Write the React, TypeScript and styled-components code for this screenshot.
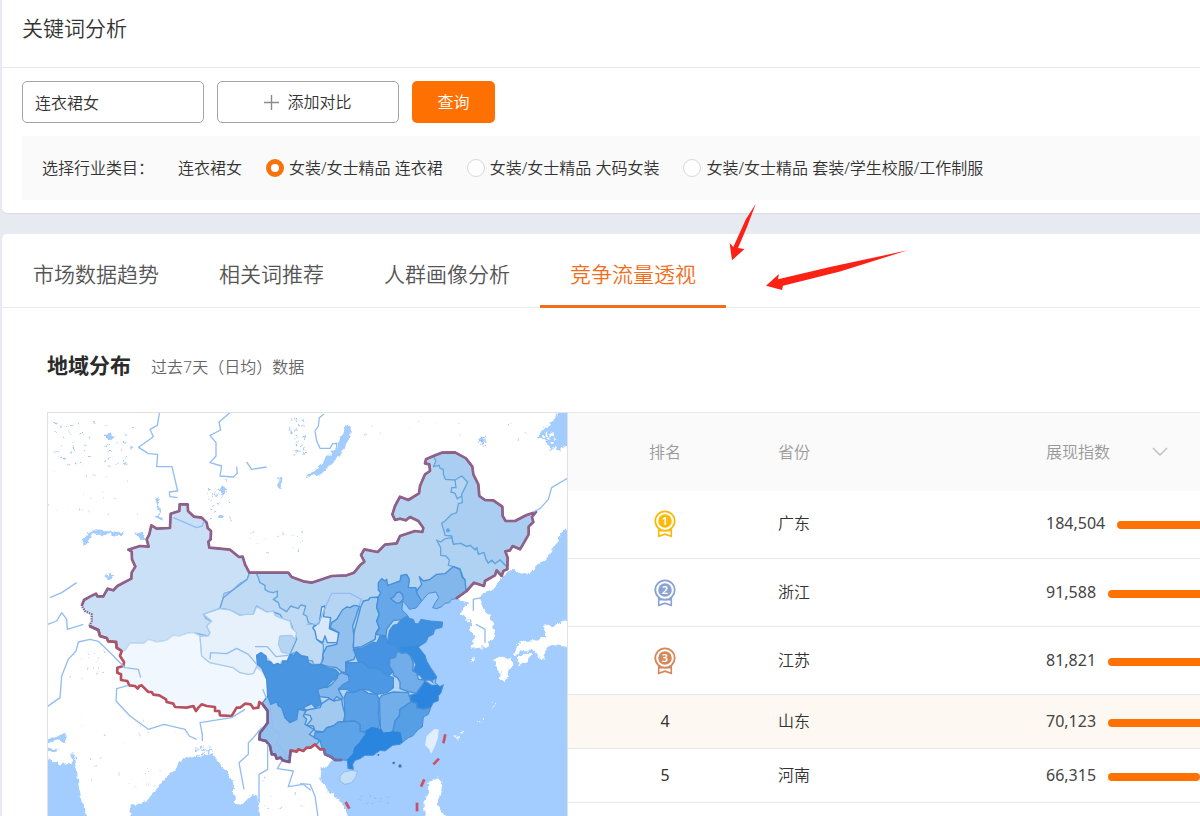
import React, { useState } from "react";
import styled, { createGlobalStyle } from "styled-components";

const GlobalStyle = createGlobalStyle`
  *, *::before, *::after { box-sizing: border-box; }
  html { overflow-x: hidden; }
  body {
    margin: 0;
    background: #e7eaf1;
    color: #333;
    font: 350 16px/24px "Noto Sans", "Noto Sans CJK SC", sans-serif;
  }
  button, input { font: inherit; color: inherit; }
`;

const Page = styled.main`
  position: relative;
  padding-left: 2px;
  display: flex;
  flex-direction: column;
  gap: 21px;
  overflow: hidden;
`;

const Card = styled.section<{ $first?: boolean }>`
  background: #fff;
  border-radius: ${(p) => (p.$first ? "0 0 0 5px" : "5px 0 0 0")};
  box-shadow: 0 1px 1px #d9dbe3;
`;

const CardHeader = styled.header`
  height: 68px;
  padding: 13px 20px;
  border-bottom: 1px solid #e6e8eb;
`;

const Title = styled.h1`
  margin: 0;
  font-size: 21px;
  line-height: 30px;
  font-weight: 350;
`;

const SearchForm = styled.form`
  padding: 13px 0 13px 20px;
`;

const SearchRow = styled.div`
  display: flex;
  gap: 13px;
  margin-bottom: 13px;
`;

const KeywordInput = styled.input`
  width: 182px;
  height: 42px;
  padding: 0 12px;
  border: 1px solid #a3a5a8;
  border-radius: 5px;
  background: #fff;
  outline: none;
`;

const CompareButton = styled.button`
  width: 182px;
  height: 42px;
  display: flex;
  align-items: center;
  justify-content: center;
  gap: 8px;
  border: 1px solid #a3a5a8;
  border-radius: 5px;
  background: #fff;
`;

const QueryButton = styled.button`
  width: 83px;
  height: 42px;
  border: 0;
  border-radius: 5px;
  background: #ff7003;
  color: #fff;
`;

const Filter = styled.div`
  height: 64px;
  padding: 0 20px;
  display: flex;
  align-items: center;
  gap: 24px;
  background: #fafafa;
  white-space: nowrap;
`;

const RadioLabel = styled.label`
  display: flex;
  align-items: center;
  gap: 5px;
`;

const Radio = styled.input`
  appearance: none;
  width: 18px;
  height: 18px;
  margin: 0;
  border: 1px solid #d8d8d8;
  border-radius: 50%;
  background: #fff;
  &:checked {
    border: 5px solid #f5730c;
  }
`;

const Tabs = styled.nav`
  display: flex;
  height: 74px;
  padding-left: 1px;
  border-bottom: 1px solid #e9eaed;
`;

const Tab = styled.button<{ $active: boolean }>`
  height: 74px;
  padding: 8px 30px 0;
  border: 0;
  border-bottom: 3px solid ${(p) => (p.$active ? "#f26d1b" : "transparent")};
  background: none;
  font-size: 21px;
  line-height: 30px;
  color: ${(p) => (p.$active ? "#f26d1b" : "#555")};
`;

const Region = styled.div`
  padding: 42px 0 0 45px;
`;

const RegionHeader = styled.div`
  display: flex;
  align-items: baseline;
  gap: 20px;
  height: 62px;
`;

const RegionTitle = styled.h2`
  margin: 0;
  font-size: 21px;
  line-height: 30px;
  font-weight: 700;
  color: #2b2b2b;
`;

const Period = styled.span`
  color: #666;
`;

const RegionBody = styled.div`
  display: flex;
  align-items: flex-start;
`;

const MapFrame = styled.figure`
  flex: 0 0 521px;
  margin: 0;
  border: 1px solid #dfe1e4;
  border-bottom: 0;
  svg {
    display: block;
    width: 100%;
  }
`;

const TableArea = styled.div`
  flex: 1;
  min-width: 0;
`;

const Ranking = styled.table`
  width: 100%;
  table-layout: fixed;
  border-collapse: collapse;
`;

const Th = styled.th<{ $width?: string; $center?: boolean }>`
  width: ${(p) => p.$width ?? "auto"};
  height: 78px;
  padding: 0 0 0 ${(p) => (p.$center ? "0" : "16px")};
  text-align: ${(p) => (p.$center ? "center" : "left")};
  font-weight: 350;
  color: #999;
  background: #fafafa;
  border-top: 1px solid #e6e8eb;
`;

const SortButton = styled.button`
  display: flex;
  align-items: center;
  gap: 42px;
  padding: 0;
  border: 0;
  background: none;
`;

const Row = styled.tr<{ $tall: boolean; $hovered: boolean }>`
  height: ${(p) => (p.$tall ? "68px" : "54px")};
  border-bottom: 1px solid #e6e8eb;
  background: ${(p) => (p.$hovered ? "#fdf9f2" : "#fff")};
`;

const Td = styled.td<{ $center?: boolean }>`
  padding: 0 0 2px ${(p) => (p.$center ? "0" : "16px")};
  text-align: ${(p) => (p.$center ? "center" : "left")};
  font-weight: ${(p) => (p.$center ? 400 : 350)};
  svg {
    display: block;
    margin: 2px auto 0;
  }
`;

const Metric = styled.div`
  display: flex;
  align-items: center;
  gap: 12px;
  overflow: hidden;
  font-weight: 400;
  color: #444;
`;

const Bar = styled.span`
  flex: none;
  height: 8px;
  margin-top: 4px;
  border-radius: 4px;
  background: #ff7103;
`;

const Arrows = styled.svg`
  position: absolute;
  left: 728px;
  top: 202px;
  pointer-events: none;
`;

/* ---------- map ---------- */

const CHINA =
  "125,600 132,582 150,572 168,563 172,571 190,571 203,548 220,553 232,540 274,518 275,500 286,482 276,460 275,437 265,431 300,420 326,422 320,400 328,385 334,358 350,368 390,366 392,323 418,315 419,295 443,295 444,315 462,332 485,335 500,350 503,366 513,375 512,400 505,407 508,425 570,431 597,453 608,452 615,475 628,500 745,500 755,513 790,526 815,530 875,510 920,508 942,500 960,478 973,467 963,447 973,430 1013,438 1035,416 1070,412 1080,390 1125,375 1147,378 1150,366 1135,345 1110,333 1097,343 1080,338 1065,342 1057,325 1065,300 1080,272 1105,282 1137,262 1140,240 1155,205 1170,195 1168,175 1155,172 1158,160 1180,150 1205,140 1245,139 1278,157 1297,182 1300,205 1315,235 1318,270 1335,282 1360,283 1387,302 1388,330 1397,345 1425,345 1460,327 1488,318 1476,333 1480,348 1466,362 1466,385 1452,410 1440,430 1418,420 1410,433 1396,436 1403,455 1402,490 1390,495 1385,510 1370,493 1365,508 1335,525 1332,540 1302,530 1280,555 1248,578";
const COAST =
  "1248,578 1235,580 1228,590 1215,592 1205,602 1190,608 1178,605 1186,590 1196,575 1188,558 1165,562 1145,585 1128,606 1108,610 1100,598 1088,585 1086,612 1100,625 1108,637 1120,640 1125,653 1135,653 1143,640 1170,645 1208,648 1206,664 1184,670 1180,685 1165,692 1158,708 1135,723 1155,748 1160,765 1172,785 1190,812 1185,830 1200,842 1210,836 1203,860 1195,870 1195,884 1180,890 1172,905 1165,925 1150,933 1147,963 1135,970 1118,990 1105,995 1080,1015 1058,1018 1035,1035 1020,1033 1000,1048 975,1048 960,1058 945,1063 938,1075 940,1090 924,1088 922,1063 905,1062";
const SOUTH =
  "905,1062 885,1062 872,1052 855,1045 852,1030 840,1030 825,1015 812,1025 800,1025 790,1035 775,1030 770,1037 752,1033 748,1068 728,1063 722,1055 710,1058 705,1045 695,1045 690,1020 678,1005 658,1000 660,980 672,965 683,950 683,915 668,895 658,888 655,905 640,907 632,895 615,893 600,905 590,905 575,930 540,928 538,915 525,915 525,903 500,900 485,895 475,905 468,915 460,900 440,905 405,903 400,893 380,888 378,880 358,868 340,866 335,858 325,858 305,838 298,840 293,848 285,840 268,838 262,825 243,822 243,805 232,800 232,785 250,780 252,768 240,750 245,735 230,725 228,708 205,706 200,696 180,690 175,672 148,660";
const WEST = "148,660 155,645 155,625 135,615 125,600";

const PROVINCES: { name: string; fill: string; points: string; line?: string }[] = [
  { name: "heilongjiang", fill: "#a9cef2", points: "1180,150 1188,165 1180,182 1198,178 1200,187 1210,190 1210,205 1216,220 1245,222 1265,210 1283,228 1275,245 1265,265 1267,290 1255,293 1250,320 1235,325 1215,345 1205,352 1212,375 1215,388 1235,390 1240,415 1262,412 1280,422 1290,418 1305,432 1310,425 1315,445 1332,440 1338,460 1345,472 1355,463 1365,473 1380,462 1400,482 1500,480 1520,300 1330,80 1180,80", line: "#64a5de" },
  { name: "jilin", fill: "#afd2f2", points: "1190,402 1202,408 1215,398 1235,395 1240,415 1262,412 1280,422 1290,418 1305,432 1310,425 1315,445 1332,440 1338,460 1345,472 1355,463 1365,473 1380,462 1400,482 1430,520 1280,580 1270,515 1260,488 1240,482 1225,478 1228,462 1218,450 1202,448 1202,425", line: "#64a5de" },
  { name: "liaoning", fill: "#82b7ec", points: "1130,555 1145,535 1138,512 1150,525 1170,520 1190,505 1215,503 1230,490 1240,482 1260,490 1267,515 1275,520 1278,555 1300,600 1180,640 1130,600" },
  { name: "xinjiang", fill: "#cae0f6", points: "628,500 622,520 600,532 575,555 552,562 548,580 540,607 490,625 498,638 512,645 510,655 500,660 510,680 505,690 460,680 440,682 420,690 400,688 380,703 350,708 325,700 312,712 270,712 255,733 150,760 80,640 100,270 640,270", line: "#87b5e5" },
  { name: "tibet", fill: "#f1f7fe", points: "240,738 255,733 270,712 312,712 325,700 350,708 380,703 400,688 420,690 440,682 460,680 480,690 485,750 510,770 580,785 600,800 625,805 640,800 650,785 665,795 680,820 686,880 683,960 200,960 200,735", line: "#c6dcf2" },
  { name: "gansu", fill: "#bfdaf4", points: "648,500 655,515 660,530 675,538 675,550 685,557 700,560 712,555 712,572 700,580 715,590 720,605 740,617 752,600 775,608 782,597 797,600 790,625 800,630 805,650 820,655 835,685 835,705 850,715 850,735 845,775 820,775 818,765 803,763 800,752 780,748 770,738 750,745 770,700 750,645 735,650 720,625 700,618 680,618 650,600 640,625 600,628 570,612 540,607 550,575 575,555 622,520 628,500", line: "#64a5de" },
  { name: "qinghai", fill: "#e6f1fc", points: "490,625 540,608 570,612 600,628 620,625 640,625 650,602 680,618 700,615 705,628 720,635 750,645 755,665 770,680 765,700 755,688 720,690 715,715 725,738 750,745 740,768 725,765 720,778 700,775 680,755 663,740 650,748 655,770 640,803 625,805 600,800 580,785 510,770 485,750 480,690 505,690 510,680 500,660 515,645", line: "#a9cbed" },
  { name: "ningxia", fill: "#d6e8fa", points: "845,603 855,600 850,632 872,635 868,668 895,680 895,710 862,710 855,690 848,710 830,700 825,675 818,665 838,650" },
  { name: "shaanxi", fill: "#91bfee", points: "907,612 920,603 930,605 942,598 958,600 945,640 938,660 942,690 940,720 948,745 942,760 917,768 918,800 905,798 890,785 865,782 842,775 850,758 848,745 860,722 890,715 897,680 870,665 875,650 890,640" },
  { name: "shanxi", fill: "#a3caf0", points: "962,603 970,585 985,582 990,575 1015,573 1010,605 1018,625 1010,645 1018,665 1008,680 1005,700 965,722 940,726 942,680 950,650" },
  { name: "hebei", fill: "#65a7e8", points: "1015,530 1025,518 1035,525 1040,520 1043,538 1060,532 1080,525 1083,508 1100,505 1108,520 1105,545 1128,545 1130,560 1145,585 1135,612 1100,640 1060,643 1040,670 1038,690 1008,685 1018,665 1010,645 1018,625 1010,605 1015,573 1022,560 1015,552" },
  { name: "beijing", fill: "#88b9ed", points: "1052,578 1062,572 1070,560 1080,558 1088,567 1090,580 1080,590 1070,592" },
  { name: "shandong", fill: "#3f90e1", points: "1045,695 1048,675 1060,658 1072,655 1085,640 1100,632 1150,620 1230,630 1230,680 1140,728 1110,733 1100,728 1090,735 1075,725 1058,725 1042,713" },
  { name: "henan", fill: "#4693e3", points: "940,730 970,725 1000,708 1010,712 1020,690 1038,692 1042,713 1058,718 1080,730 1078,745 1065,755 1048,755 1045,772 1055,780 1062,795 1045,810 1025,798 1015,788 985,785 970,770 955,768 948,750" },
  { name: "jiangsu", fill: "#358be0", points: "1075,733 1080,720 1140,715 1220,835 1180,830 1170,822 1150,822 1140,808 1118,800 1128,775 1112,750 1100,740 1085,742" },
  { name: "anhui", fill: "#70adea", points: "1072,735 1085,742 1100,740 1112,750 1120,772 1118,795 1130,800 1135,820 1155,822 1150,845 1140,845 1130,862 1105,857 1080,848 1080,828 1072,815 1060,808 1060,798 1048,780 1050,757 1065,755" },
  { name: "hubei", fill: "#4c98e4", points: "918,770 950,770 970,770 985,785 1015,788 1045,810 1060,815 1060,845 1040,860 1010,865 985,852 965,850 940,860 920,850 895,850 900,835 925,828 932,815 918,800" },
  { name: "zhejiang", fill: "#2b84dd", points: "1155,825 1175,838 1240,825 1230,890 1160,925 1145,910 1130,905 1130,892 1113,888 1110,868 1130,862 1140,848" },
  { name: "chongqing", fill: "#83b7ed", points: "832,850 845,842 860,845 875,835 890,818 895,805 905,800 925,808 928,825 910,835 895,850 908,875 905,882 890,872 880,885 865,875 838,872" },
  { name: "sichuan", fill: "#4a95e1", points: "650,748 663,740 678,750 680,765 692,768 700,778 712,772 725,778 728,765 742,765 750,745 762,748 770,738 785,750 803,753 805,770 820,778 842,775 860,785 885,790 895,800 890,815 875,825 860,842 832,850 838,872 845,895 825,905 815,893 790,905 800,915 785,918 775,910 770,940 750,950 735,935 725,905 715,900 710,888 692,895 683,870 680,820 665,785 652,775" },
  { name: "yunnan", fill: "#97c2ed", points: "668,890 683,870 692,895 710,888 715,900 725,905 735,935 750,950 770,940 775,910 800,915 790,930 800,940 795,955 822,970 808,985 825,995 840,1003 825,1020 812,1080 680,1080 640,1000 680,930" },
  { name: "guizhou", fill: "#a2caf0", points: "792,925 800,912 840,905 845,893 868,878 880,885 905,880 908,900 915,925 910,950 895,948 880,960 860,965 850,978 825,975 820,960 800,958 815,940 810,928" },
  { name: "hunan", fill: "#5aa0e6", points: "912,875 920,858 940,860 965,850 985,862 1010,865 1018,880 1015,920 1020,960 1010,970 1000,965 990,982 960,975 960,955 945,945 912,950 915,925" },
  { name: "jiangxi", fill: "#72afea", points: "1018,880 1025,868 1060,858 1105,860 1113,888 1095,900 1080,910 1078,930 1065,945 1062,970 1055,980 1022,982 1020,935" },
  { name: "fujian", fill: "#569fe5", points: "1113,888 1130,892 1130,905 1150,910 1170,905 1190,940 1090,1035 1080,985 1058,978 1065,945 1078,930 1080,910 1095,900" },
  { name: "guangxi", fill: "#5ca3e7", points: "825,980 850,978 860,965 880,960 895,948 945,945 960,955 960,975 980,983 970,995 960,1010 945,1025 940,1045 925,1063 860,1080 840,1003 822,995" },
  { name: "guangdong", fill: "#2a85de", points: "980,983 978,975 995,965 1022,970 1030,982 1060,978 1080,980 1090,1030 1000,1060 950,1110 900,1110 920,1065 940,1045 945,1025 960,1010", line: "#2a85de" },
];

const SEAS = [
  "1600,355 1563,380 1540,430 1505,470 1470,500 1448,503 1425,495 1418,486 1400,503 1380,520 1365,545 1328,560 1318,580 1330,608 1348,628 1360,660 1362,690 1348,715 1335,723 1295,728 1302,690 1290,665 1295,645 1262,625 1270,605 1285,590 1255,582 1200,540 1100,545 1030,650 900,900 900,1030 880,1060 842,1090 838,1120 862,1150 890,1175 915,1205 930,1250 1600,1250",
  "1600,0 1552,20 1545,40 1530,52 1512,70 1490,92 1515,100 1525,115 1530,135 1545,125 1560,138 1570,118 1600,130",
  "270,1250 272,1200 320,1185 345,1155 385,1105 405,1090 420,1065 455,1050 480,1055 520,1040 535,1070 560,1098 580,1130 585,1190 610,1195 640,1165 655,1170 662,1250",
  "10,1050 60,1075 95,1070 98,1035 108,1070 115,1133 125,1185 148,1250 10,1250",
  "916,55 932,60 932,82 924,104 900,150 872,174 844,204 795,214 838,183 864,150 882,132 898,103 910,80",
  "190,508 215,500 227,510 205,520",
];

const LANDS = [
  "1420,738 1435,715 1455,705 1500,700 1515,690 1512,660 1530,655 1540,665 1560,650 1600,630 1600,723 1540,718 1518,728 1512,758 1490,750 1485,735 1450,733 1420,750",
  "1366,760 1385,752 1415,755 1417,780 1405,800 1398,825 1380,818 1382,800 1370,785",
  "1430,755 1455,740 1478,742 1470,758 1438,780",
  "1165,1130 1180,1120 1203,1122 1208,1145 1200,1175 1190,1195 1215,1230 1240,1250 1158,1250 1150,1190 1163,1170",
  "1290,760 1305,757 1302,766 1292,766",
];

const RIVERS = [
  "360,10 352,58 330,70 340,92 296,124 325,143 353,145 350,182 396,182 413,255 388,258 390,272 413,275",
  "582,10 537,48 542,72 510,88 528,110 528,150 510,170 545,180 540,210 580,213 592,202 590,182",
  "620,168 635,190 680,183",
  "852,24 838,35 835,60 825,75 830,105 840,127 870,127 878,113 890,112 890,125",
  "1590,212 1535,245 1525,280 1500,308 1480,318",
  "400,335 470,365 487,360 492,345",
  "30,575 65,560 110,530",
  "10,660 50,645 65,620 80,640 82,670 130,655",
  "10,910 60,875 65,810 85,760 108,735 115,708 150,700 175,706 215,745 255,785 295,790 302,815",
  "265,838 230,848 228,885 270,930 325,970 372,955 435,970 448,990 470,1000",
  "615,910 575,935 480,950 487,985 487,1005",
  "665,965 640,995 625,1010 625,1045 597,1070 612,1150",
  "683,1015 683,1090 657,1105 657,1190",
  "725,1065 712,1088 760,1095 745,1142 790,1135 812,1153",
  "510,760 512,740 560,743 590,727 625,745 650,775",
  "645,722 682,722 708,752 745,748",
  "668,850 690,900 700,970 720,985 712,1010 745,1060",
  "780,1133 810,1135 825,1170 835,1240",
  "1325,575 1300,580 1300,615",
  "800,655 835,655 862,590 875,562 930,562 965,580 955,600",
  "1308,655 1335,670 1335,710",
];

const LAKES = [
  "346,278 362,284 350,305 358,318 345,332 368,340 355,325 362,310",
  "130,400 145,380 160,374 250,380 248,386 160,382 148,395 138,415 128,418",
  "287,377 305,382 315,398 304,402",
  "716,215 726,214 724,245 716,240",
  "540,250 552,240 556,262 546,268",
  "195,90 210,82 222,95 208,100",
  "10,1003 75,985 78,1015 55,1000 26,1010",
  "10,1028 58,1030 30,1037",
  "1320,100 1330,94 1326,115",
  "535,335 548,323 552,330 540,340",
];

const NINE_DASH: [number, number, number, number][] = [
  [1216, 985, 1210, 1012],
  [1197, 1058, 1180, 1075],
  [1153, 1120, 1143, 1142],
  [1131, 1190, 1131, 1216],
  [917, 1188, 928, 1208],
];

type Cluster = { x: number; y: number; w: number; h: number; n: number; c: string; r: number };
const CLUSTERS: Cluster[] = [
  { x: 30, y: 40, w: 250, h: 140, n: 58, c: "#a4c5f0", r: 3 },
  { x: 24, y: 190, w: 300, h: 150, n: 22, c: "#b4cff4", r: 2 },
  { x: 500, y: 220, w: 75, h: 120, n: 24, c: "#a4c5f0", r: 3 },
  { x: 590, y: 350, w: 200, h: 90, n: 16, c: "#b4c8e4", r: 2 },
  { x: 745, y: 34, w: 48, h: 110, n: 34, c: "#a4c5f0", r: 3 },
  { x: 960, y: 40, w: 500, h: 60, n: 14, c: "#b4c8e4", r: 2 },
  { x: 1315, y: 85, w: 20, h: 45, n: 12, c: "#8fb8ee", r: 3 },
  { x: 75, y: 730, w: 120, h: 90, n: 20, c: "#c3cad8", r: 2 },
  { x: 110, y: 920, w: 330, h: 220, n: 34, c: "#c3cad8", r: 2 },
  { x: 465, y: 1020, w: 60, h: 40, n: 36, c: "#a3ccff", r: 3 },
  { x: 665, y: 1110, w: 140, h: 110, n: 14, c: "#a9c4ee", r: 2 },
  { x: 958, y: 1160, w: 90, h: 35, n: 16, c: "#86b5f0", r: 2 },
  { x: 1505, y: 80, w: 40, h: 45, n: 12, c: "#ffffff", r: 5 },
  { x: 1230, y: 965, w: 40, h: 30, n: 4, c: "#ffffff", r: 3 },
  { x: 1270, y: 610, w: 30, h: 40, n: 8, c: "#ffffff", r: 5 },
  { x: 1355, y: 890, w: 10, h: 18, n: 3, c: "#ffffff", r: 2 },
  { x: 1310, y: 935, w: 30, h: 15, n: 3, c: "#ffffff", r: 2 },
];

function speckles(cluster: Cluster, seed: number) {
  let s = seed * 7919 + 17;
  const next = () => {
    s = (s * 16807) % 2147483647;
    return s / 2147483647;
  };
  next();
  return Array.from({ length: cluster.n }, (_, i) => (
    <rect
      key={`${seed}-${i}`}
      x={cluster.x + next() * cluster.w}
      y={cluster.y + next() * cluster.h}
      width={cluster.r + next() * cluster.r}
      height={cluster.r + next() * 2}
      fill={cluster.c}
    />
  ));
}

function ChinaMap() {
  return (
    <svg viewBox="24 21 1557 1212" role="img" aria-label="地域分布地图">
      <defs>
        <clipPath id="china">
          <polygon points={`${CHINA} ${COAST} ${SOUTH} ${WEST}`} />
        </clipPath>
        <filter id="rough" filterUnits="userSpaceOnUse" x="0" y="0" width="1610" height="1260" colorInterpolationFilters="sRGB">
          <feTurbulence type="fractalNoise" baseFrequency="0.06" numOctaves="3" seed="4" />
          <feDisplacementMap in="SourceGraphic" scale="18" xChannelSelector="R" yChannelSelector="G" />
        </filter>
        <linearGradient id="border" gradientUnits="userSpaceOnUse" x1="0" y1="640" x2="0" y2="760">
          <stop offset="0" stopColor="#80608e" />
          <stop offset="1" stopColor="#bd5263" />
        </linearGradient>
      </defs>
      <rect x="24" y="21" width="1557" height="1212" fill="#fff" />
      <g filter="url(#rough)">
        {SEAS.map((p) => (
          <polygon key={p} points={p} fill="#a3ccff" />
        ))}
        {LANDS.map((p) => (
          <polygon key={p} points={p} fill="#fff" />
        ))}
        {LAKES.map((p) => (
          <polygon key={p} points={p} fill="#a3ccff" stroke="#9cc6fa" strokeWidth="2" />
        ))}
        {CLUSTERS.map((c, i) => speckles(c, i + 1))}
      </g>
      <g clipPath="url(#china)">
        <rect x="24" y="21" width="1557" height="1212" fill="#b5d5f3" />
        {PROVINCES.map((p) => (
          <polygon
            key={p.name}
            points={p.points}
            fill={p.fill}
            stroke={p.line ?? "#468fd9"}
            strokeWidth="4"
            strokeLinejoin="round"
          />
        ))}
        <polyline
          points="1245,222 1248,245 1235,245 1233,258 1245,262 1252,278 1265,270"
          fill="none"
          stroke="#64a5de"
          strokeWidth="4"
        />
        <circle cx="1224" cy="373" r="6" fill="#64a5de" />
        <polygon points="1178,822 1190,818 1195,835 1180,838" fill="#8fbff0" />
      </g>
      <polyline points={COAST} fill="none" stroke="#468fd9" strokeWidth="3" />
      <polygon
        points="900,1110 912,1098 935,1093 952,1096 948,1112 935,1130 915,1135 900,1125"
        fill="#c5dff7"
        stroke="#7fb0e6"
        strokeWidth="2"
      />
      <polygon
        points="1182,970 1196,970 1194,995 1186,1018 1173,1045 1168,1030 1155,1018 1160,990"
        fill="#e2effb"
      />
      <polyline points={CHINA} fill="none" stroke="#b94a62" strokeWidth="8" strokeLinejoin="round" />
      <polyline points={CHINA} fill="none" stroke="#776b9b" strokeWidth="5" strokeLinejoin="round" />
      <polyline points={SOUTH} fill="none" stroke="#b9505f" strokeWidth="8" strokeLinejoin="round" />
      <polyline
        points="905,1062 885,1062 872,1052 855,1045 852,1030"
        fill="none"
        stroke="#6f6fa8"
        strokeWidth="7"
        strokeLinejoin="round"
      />
      <polyline
        points="752,1033 748,1068 728,1063 722,1055 710,1058 705,1045 695,1045 690,1020 678,1005 658,1000 660,980 672,965 683,950 683,915 668,895"
        fill="none"
        stroke="#6f5f94"
        strokeWidth="7"
        strokeLinejoin="round"
      />
      <polyline
        points="148,660 175,672 180,690 200,696 205,706 228,708 230,725 245,735"
        fill="none"
        stroke="url(#border)"
        strokeWidth="8"
      />
      <polyline points={WEST} fill="none" stroke="#80608e" strokeWidth="7" strokeDasharray="4 3" />
      {RIVERS.map((p) => (
        <polyline key={p} points={p} fill="none" stroke="#92bdf3" strokeWidth="4" strokeLinejoin="round" />
      ))}
      {NINE_DASH.map(([x1, y1, x2, y2]) => (
        <line key={x1} x1={x1} y1={y1} x2={x2} y2={y2} stroke="#cc4f68" strokeWidth="8" />
      ))}
      <circle cx="1061" cy="1071" r="4" fill="#3c78bd" />
      <circle cx="1080" cy="1080" r="5" fill="#3c78bd" />
      <circle cx="1015" cy="1047" r="3" fill="#3c78bd" />
    </svg>
  );
}

const MEDALS = ["#fbba0a", "#8ba3d2", "#d6875a"];

function Medal({ rank }: { rank: number }) {
  const color = MEDALS[rank - 1];
  return (
    <svg width="22" height="28" viewBox="0 0 22 28" role="img" aria-label={`第${rank}名`}>
      <path d="M4.7 18v8.300L11 24.200l6.300 2.100V18" fill="none" stroke={color} strokeWidth="1.6" />
      <path d="M5 20.500h12" stroke={color} strokeWidth="2" />
      <circle cx="11" cy="11" r="9.7" fill="#fff" stroke={color} strokeWidth="1.8" />
      <circle cx="11" cy="11" r="6.8" fill={color} />
      <text x="11" y="15" textAnchor="middle" fontSize="11" fontWeight="600" fill="#fff">
        {rank}
      </text>
    </svg>
  );
}

const CATEGORIES = [
  "女装/女士精品 连衣裙",
  "女装/女士精品 大码女装",
  "女装/女士精品 套装/学生校服/工作制服",
];
const TABS = ["市场数据趋势", "相关词推荐", "人群画像分析", "竞争流量透视"];
const ROWS = [
  { province: "广东", value: 184504 },
  { province: "浙江", value: 91588 },
  { province: "江苏", value: 81821 },
  { province: "山东", value: 70123 },
  { province: "河南", value: 66315 },
];

export default function App() {
  const [keyword, setKeyword] = useState("连衣裙女");
  const [category, setCategory] = useState(0);
  const [tab, setTab] = useState(3);
  const [hovered, setHovered] = useState(3);

  return (
    <>
      <GlobalStyle />
      <Page>
        <Card $first>
          <CardHeader>
            <Title>关键词分析</Title>
          </CardHeader>
          <SearchForm onSubmit={(e) => e.preventDefault()}>
            <SearchRow>
              <KeywordInput aria-label="关键词" value={keyword} onChange={(e) => setKeyword(e.target.value)} />
              <CompareButton type="button">
                <svg width="15" height="15" viewBox="0 0 15 15" aria-hidden="true">
                  <path d="M7.5 0v15M0 7.5h15" stroke="#8c8c8c" strokeWidth="1.4" />
                </svg>
                添加对比
              </CompareButton>
              <QueryButton type="submit">查询</QueryButton>
            </SearchRow>
            <Filter role="radiogroup" aria-label="选择行业类目">
              <span>选择行业类目：</span>
              <span>连衣裙女</span>
              {CATEGORIES.map((name, i) => (
                <RadioLabel key={name}>
                  <Radio type="radio" name="category" checked={category === i} onChange={() => setCategory(i)} />
                  {name}
                </RadioLabel>
              ))}
            </Filter>
          </SearchForm>
        </Card>

        <Card>
          <Tabs>
            {TABS.map((name, i) => (
              <Tab key={name} type="button" $active={tab === i} onClick={() => setTab(i)}>
                {name}
              </Tab>
            ))}
          </Tabs>
          <Region>
            <RegionHeader>
              <RegionTitle>地域分布</RegionTitle>
              <Period>过去7天（日均）数据</Period>
            </RegionHeader>
            <RegionBody>
              <MapFrame>
                <ChinaMap />
              </MapFrame>
              <TableArea>
                <Ranking>
                  <thead>
                    <tr>
                      <Th $width="194px" $center>排名</Th>
                      <Th $width="268px">省份</Th>
                      <Th>
                        <SortButton type="button">
                          展现指数
                          <svg width="16" height="10" viewBox="0 0 16 10" aria-hidden="true">
                            <path d="M1 1l7 7 7-7" fill="none" stroke="#bdbdbd" strokeWidth="1.4" />
                          </svg>
                        </SortButton>
                      </Th>
                    </tr>
                  </thead>
                  <tbody>
                    {ROWS.map((row, i) => (
                      <Row
                        key={row.province}
                        $tall={i < 3}
                        $hovered={hovered === i}
                        onMouseEnter={() => setHovered(i)}
                      >
                        <Td $center>{i < 3 ? <Medal rank={i + 1} /> : i + 1}</Td>
                        <Td>{row.province}</Td>
                        <Td>
                          <Metric>
                            {row.value.toLocaleString("en-US")}
                            <Bar style={{ width: Math.round(row.value / 720) }} />
                          </Metric>
                        </Td>
                      </Row>
                    ))}
                  </tbody>
                </Ranking>
              </TableArea>
            </RegionBody>
          </Region>
        </Card>

        <Arrows width="182" height="92" viewBox="728 202 182 92" aria-hidden="true">
          <path d="M755.7 204 746 219 733.300 247 729.600 243 732 260.300 744.500 249 738 248 747 227z" fill="#fb2114" />
          <path d="M907.700 250.300 840 271.500 783 285.700 782 290 766 285.700 779 274 778 279.300 830 267z" fill="#fb2114" />
        </Arrows>
      </Page>
    </>
  );
}
